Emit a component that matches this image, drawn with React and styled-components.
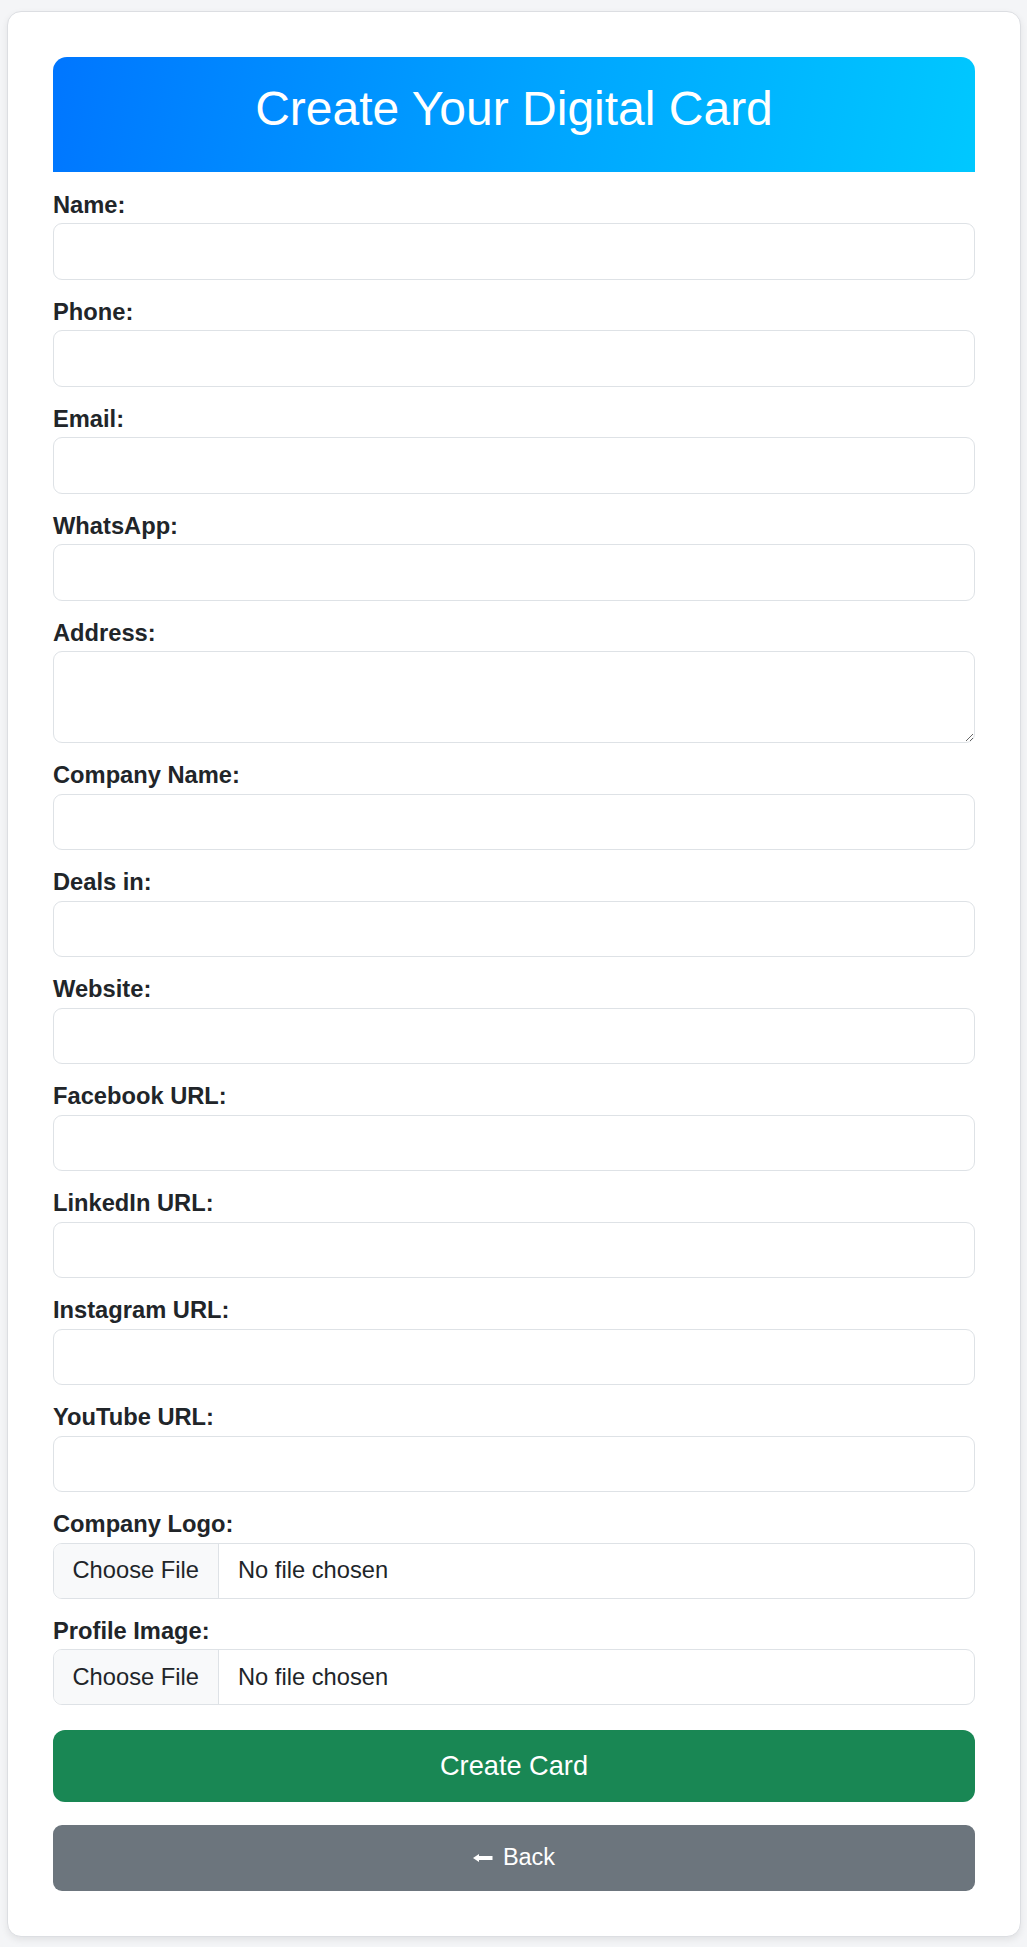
import React from "react";
import styled, { createGlobalStyle } from "styled-components";

const GlobalStyle = createGlobalStyle`
  * { box-sizing: border-box; }
  html, body { margin: 0; padding: 0; }
  body {
    background: #f4f5f7;
    font-family: "Liberation Sans", Arial, Helvetica, sans-serif;
    color: #212529;
  }
`;

const Page = styled.div`
  padding: 11px 6px 10px 7px;
`;

const Card = styled.div`
  background: #ffffff;
  border: 1px solid #dcdee2;
  border-radius: 14px;
  box-shadow: 0 3px 7px rgba(0, 0, 0, 0.08);
  padding: 45px;
`;

const Header = styled.div`
  background: linear-gradient(100deg, #0076ff 0%, #00a6ff 55%, #00c8ff 100%);
  border-radius: 14px 14px 0 0;
  padding: 23px 20px 34.4px;
  text-align: center;
`;

const Title = styled.h2`
  margin: 0;
  font-size: 48px;
  line-height: 57.6px;
  font-weight: 400;
  color: #ffffff;
`;

const Form = styled.form`
  display: flex;
  flex-direction: column;
  gap: 15.2px;
  margin-top: 16px;
`;

const Group = styled.div`
  display: flex;
  flex-direction: column;
`;

const Label = styled.label`
  font-size: 23.7px;
  line-height: 35.5px;
  font-weight: 700;
  color: #212529;
`;

const Input = styled.input`
  display: block;
  width: 100%;
  height: 56.3px;
  border: 1px solid #dee2e6;
  border-radius: 9px;
  padding: 9px 18px;
  font: inherit;
  font-size: 23.7px;
  background: #fff;
  outline: none;
`;

const TextArea = styled.textarea`
  display: block;
  width: 100%;
  height: 91.8px;
  border: 1px solid #dee2e6;
  border-radius: 9px;
  padding: 9px 18px;
  font: inherit;
  font-size: 23.7px;
  background: #fff;
  resize: vertical;
  outline: none;
`;

const FileBox = styled.label`
  display: flex;
  align-items: stretch;
  height: 56px;
  border: 1px solid #dee2e6;
  border-radius: 9px;
  overflow: hidden;
  background: #fff;
  cursor: pointer;
  font-size: 23.7px;
  color: #212529;
`;

const HiddenFile = styled.input`
  position: absolute;
  width: 1px;
  height: 1px;
  opacity: 0;
  pointer-events: none;
`;

const FileButton = styled.span`
  display: flex;
  align-items: center;
  padding: 0 18px 0 18.5px;
  background: #f8f9fa;
  border-right: 1px solid #dee2e6;
  width: 165px;
`;

const FileName = styled.span`
  display: flex;
  align-items: center;
  padding-left: 19px;
`;

const Button = styled.button`
  display: flex;
  align-items: center;
  justify-content: center;
  gap: 10px;
  width: 100%;
  height: ${(p) => p.$h}px;
  margin-top: ${(p) => p.$mt}px;
  border: none;
  border-radius: ${(p) => p.$r}px;
  background: ${(p) => p.$bg};
  color: #fff;
  font-family: inherit;
  font-size: ${(p) => p.$fs}px;
  cursor: pointer;
`;

const ButtonStack = styled.div`
  display: flex;
  flex-direction: column;
`;

const ArrowIcon = () => (
  <svg width="20" height="8" viewBox="0 0 20 8" aria-hidden="true">
    <path d="M0 4 L6 0 L6 2 L19.5 2 L19.5 6 L6 6 L6 8 Z" fill="#fff" />
  </svg>
);

const fields = [
  { label: "Name:", type: "text" },
  { label: "Phone:", type: "text" },
  { label: "Email:", type: "email" },
  { label: "WhatsApp:", type: "text" },
  { label: "Address:", area: true },
  { label: "Company Name:", type: "text" },
  { label: "Deals in:", type: "text" },
  { label: "Website:", type: "text" },
  { label: "Facebook URL:", type: "text" },
  { label: "LinkedIn URL:", type: "text" },
  { label: "Instagram URL:", type: "text" },
  { label: "YouTube URL:", type: "text" },
];

const files = ["Company Logo:", "Profile Image:"];

export default function App() {
  return (
    <>
      <GlobalStyle />
      <Page>
        <Card>
          <Header>
            <Title>Create Your Digital Card</Title>
          </Header>
          <Form onSubmit={(e) => e.preventDefault()}>
            {fields.map((f, i) => (
              <Group key={f.label}>
                <Label htmlFor={`f${i}`}>{f.label}</Label>
                {f.area ? (
                  <TextArea id={`f${i}`} rows={2} />
                ) : (
                  <Input id={`f${i}`} type={f.type} />
                )}
              </Group>
            ))}
            {files.map((l) => (
              <Group key={l}>
                <Label as="div">{l}</Label>
                <FileBox>
                  <HiddenFile type="file" />
                  <FileButton>Choose File</FileButton>
                  <FileName>No file chosen</FileName>
                </FileBox>
              </Group>
            ))}
            <ButtonStack>
              <Button type="submit" $h={71.7} $mt={9.2} $r={12} $bg="#198754" $fs={27.2}>
                Create Card
              </Button>
              <Button type="button" $h={65.7} $mt={23.3} $r={9} $bg="#6c757d" $fs={23.5}>
                <ArrowIcon />
                Back
              </Button>
            </ButtonStack>
          </Form>
        </Card>
      </Page>
    </>
  );
}
